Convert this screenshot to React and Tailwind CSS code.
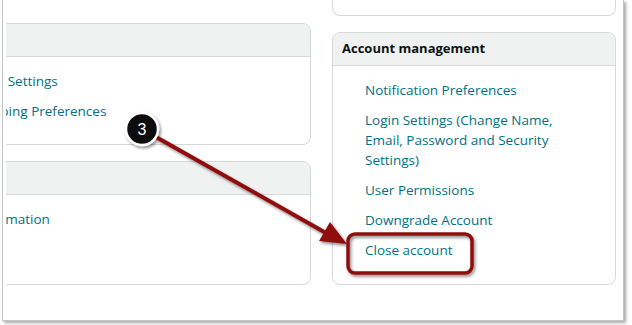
const links = [
  "Notification Preferences",
  "Login Settings (Change Name, Email, Password and Security Settings)",
  "User Permissions",
  "Downgrade Account",
  "Close account",
];

function Card({ title, className = "", children }) {
  return (
    <div className={`rounded-lg border border-[#d5d9d9] bg-white overflow-hidden ${className}`}>
      <div className="h-[33px] bg-[#f0f2f2] border-b border-[#d5d9d9] px-[9px] flex items-center text-[13px] font-bold text-[#0f1111]">
        {title}
      </div>
      {children}
    </div>
  );
}

function Annotation() {
  return (
    <svg className="absolute inset-0 pointer-events-none" width="632" height="325" viewBox="0 0 632 325">
      <defs>
        <filter id="sh" x="-20%" y="-20%" width="140%" height="140%">
          <feDropShadow dx="1.5" dy="2" stdDeviation="1.5" floodColor="#000" floodOpacity="0.45" />
        </filter>
      </defs>
      <g filter="url(#sh)">
        <line x1="156" y1="137" x2="326" y2="233" stroke="#8f0b0b" strokeWidth="4" />
        <polygon points="347,244 330,222 319,241" fill="#8f0b0b" />
        <rect x="348" y="234" width="124" height="39" rx="7" fill="none" stroke="#8f0b0b" strokeWidth="3.5" />
        <circle cx="142" cy="129" r="16" fill="#111" stroke="#fff" strokeWidth="2.5" />
      </g>
      <text x="142" y="135" textAnchor="middle" fill="#fff" fontSize="16" fontFamily="'Liberation Sans', Arial, sans-serif">
        3
      </text>
    </svg>
  );
}

export default function App() {
  return (
    <div className="relative w-[632px] h-[325px] bg-white overflow-hidden font-['Open_Sans',sans-serif]">
      <div className="ml-[2px] w-[622px] h-[321px] bg-white border-x border-b border-[#c4c4c4] shadow-[2px_2px_3px_rgba(0,0,0,0.35)] flex overflow-hidden">
        {/* left column, clipped by the frame */}
        <div className="ml-[3px] w-[305px] h-full overflow-hidden flex flex-col gap-[16px] pt-[23px] pb-[35px]">
          <Card title="" className="ml-[-40px] w-[345px]">
            <div className="pt-[14px] pb-[23px] flex flex-col gap-[10px] text-[13.5px] leading-[20px] text-[#007185] whitespace-nowrap">
              <span className="ml-[3px]">Login Settings</span>
              <span className="ml-[6px]">Shipping Preferences</span>
            </div>
          </Card>
          <Card title="" className="ml-[-40px] w-[345px] flex-1">
            <div className="pt-[14px] flex flex-col text-[13.5px] leading-[20px] text-[#007185] whitespace-nowrap">
              <span className="ml-[8px]">Information</span>
            </div>
          </Card>
        </div>

        {/* right column */}
        <div className="ml-[21px] w-[284px] h-full flex flex-col gap-[16px] pb-[35px]">
          <div className="mt-[-20px] h-[36px] rounded-b-lg border-x border-b border-[#d5d9d9]" />
          <Card title="Account management" className="flex-1">
            <div className="pt-[14px] pl-[32px] pr-[40px] flex flex-col gap-[10px] text-[13.5px] leading-[20px] text-[#007185]">
              {links.map((l) => (
                <span key={l}>{l}</span>
              ))}
            </div>
          </Card>
        </div>
      </div>
      <Annotation />
    </div>
  );
}
